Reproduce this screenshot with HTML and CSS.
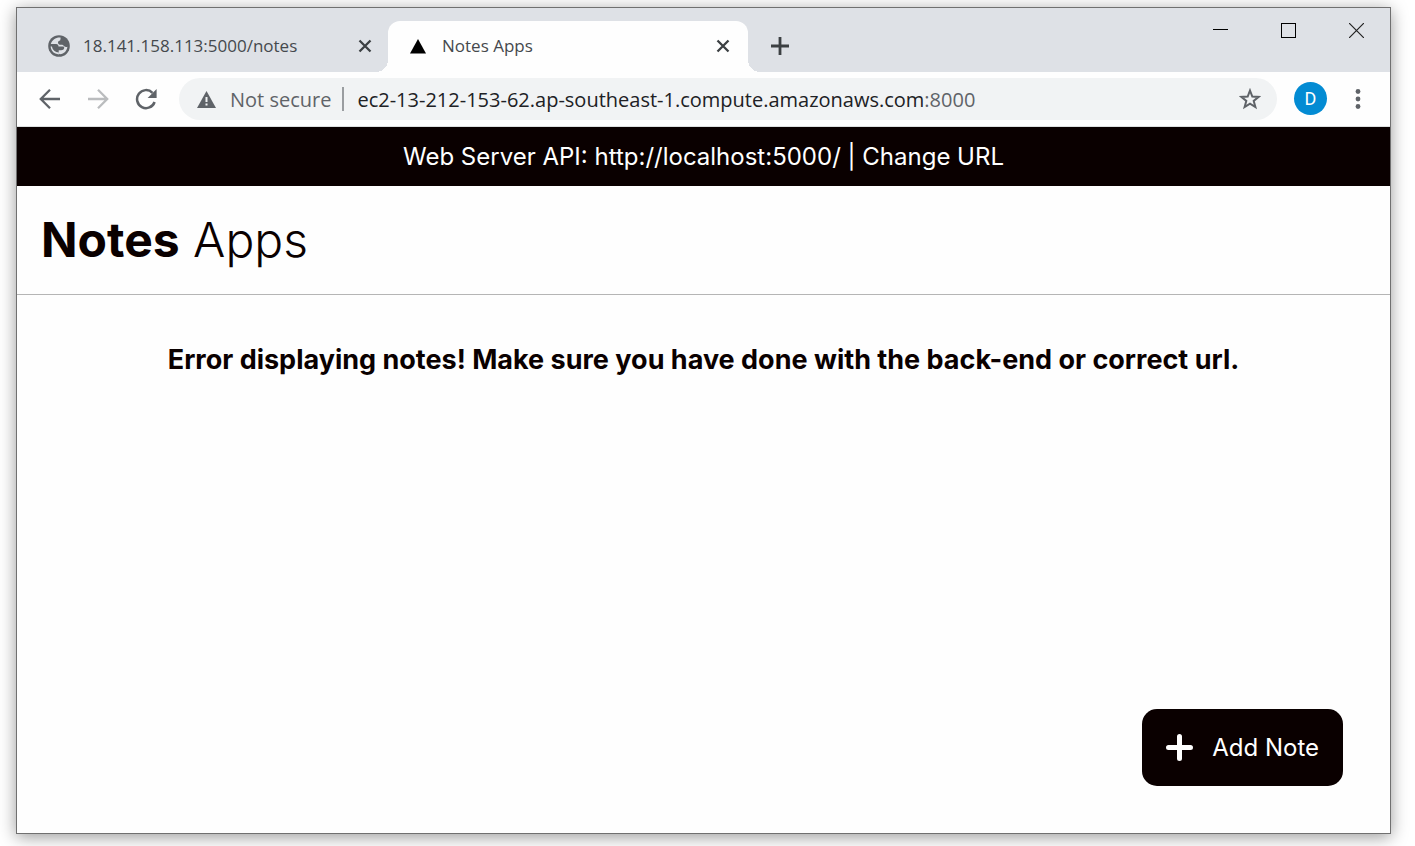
FILE: index.html
```html
<!DOCTYPE html>
<html lang="en">
<head>
<meta charset="utf-8">
<meta name="viewport" content="width=device-width, initial-scale=1">
<title>Notes Apps</title>
<link rel="stylesheet" href="styles.css">
</head>
<body>
<div class="window">
  <div class="tab-strip">
    <div class="tab">
      <svg class="tab-icon" viewBox="0 0 22 22" aria-hidden="true"><circle cx="11" cy="11" r="10.800" fill="#5f6368"/><path d="M12.500 2.600C8 2.200 4.200 4.800 2.800 9h5.400c1.500 0 2.300.9 2.300 2.400h4.300c1.100 0 1.600.7 1.400 1.700-.3 1.600-1.400 2.200-3 2.200h-2.500v2.500c0 .9.500 1.300 1.300 1.500 4-.4 7-3.600 7.400-7.600-1.200.4-2.300.3-3.200-.4-.8-.6-1-1.500-2-1.600h-2.300c-1.200 0-1.900-.9-1.900-2.100 0-1.300.9-1.800 2.100-2.100.5-1 .6-2 .4-2.900z" fill="#dee1e6"/><path d="M2.600 11.500c.2 3.200 2 5.900 4.800 7.100 1.200.5 2.300.8 3.500.8v-1.800c-3.800-.3-6.300-2.600-7-6.100z" fill="#dee1e6"/></svg>
      <span class="tab-title">18.141.158.113:5000/notes</span>
      <button class="tab-close" aria-label="Close tab"><svg viewBox="0 0 14 14"><path d="M1.500 1.500l11 11M12.500 1.500l-11 11" stroke="#3c4043" stroke-width="2.300"/></svg></button>
    </div>
    <div class="tab tab-active">
      <svg class="tab-icon" viewBox="0 0 22 22" aria-hidden="true"><path d="M11 4l8 14.500H3z" fill="#000"/></svg>
      <span class="tab-title">Notes Apps</span>
      <button class="tab-close" aria-label="Close tab"><svg viewBox="0 0 14 14"><path d="M1.500 1.500l11 11M12.500 1.500l-11 11" stroke="#3c4043" stroke-width="2.300"/></svg></button>
    </div>
    <button class="new-tab" aria-label="New tab"><svg viewBox="0 0 18 18"><path d="M9 0v18M0 9h18" stroke="#3c4043" stroke-width="2.800"/></svg></button>
    <div class="window-controls">
      <button class="window-button" aria-label="Minimize"><svg viewBox="0 0 15 15" shape-rendering="crispEdges"><path d="M0 6.500h15" stroke="#000"/></svg></button>
      <button class="window-button" aria-label="Maximize"><svg viewBox="0 0 15 15" shape-rendering="crispEdges"><path d="M.5.5h14v14H.5z" fill="none" stroke="#000"/></svg></button>
      <button class="window-button" aria-label="Close"><svg viewBox="0 0 15 15"><path d="M0 0l15 15M15 0L0 15" stroke="#222" stroke-width="1.200"/></svg></button>
    </div>
  </div>
  <div class="toolbar">
    <div class="nav">
      <button class="nav-button" aria-label="Back"><svg viewBox="0 0 22 22"><path d="M21 11H2.500M11 1.800L1.800 11l9.200 9.200" fill="none" stroke="#5f6368" stroke-width="2.300"/></svg></button>
      <button class="nav-button" aria-label="Forward" disabled><svg viewBox="0 0 22 22"><path d="M1 11h18.500M11 1.800l9.200 9.200-9.200 9.200" fill="none" stroke="#babcbe" stroke-width="2.300"/></svg></button>
      <button class="nav-button" aria-label="Reload"><svg viewBox="0 0 22 22"><path d="M19.600 14A9 9 0 1 1 17.500 4.800" fill="none" stroke="#5f6368" stroke-width="2.500"/><path d="M21.600 1v9h-9z" fill="#5f6368"/></svg></button>
    </div>
    <div class="omnibox">
      <svg class="warning" viewBox="0 0 19 17" aria-hidden="true"><path d="M9.500 0L19 17H0z" fill="#5f6368"/><path d="M9.500 6v5M9.500 12.500v2" stroke="#f1f3f4" stroke-width="2"/></svg>
      <span class="security">Not secure</span>
      <span class="separator"></span>
      <div class="url">ec2-13-212-153-62.ap-southeast-1.compute.amazonaws.com<span class="port">:8000</span></div>
      <button class="star" aria-label="Bookmark this page"><svg viewBox="0 0 22 22"><path d="M11 2.500l2.300 6 6.400.4-5 4 1.700 6.200-5.400-3.500-5.400 3.500 1.700-6.200-5-4 6.400-.4z" fill="none" stroke="#5f6368" stroke-width="2"/></svg></button>
    </div>
    <button class="avatar" aria-label="Profile">D</button>
    <button class="menu" aria-label="Menu"><svg viewBox="0 0 6 20"><g fill="#5f6368"><circle cx="3" cy="2.500" r="2.400"/><circle cx="3" cy="10" r="2.400"/><circle cx="3" cy="17.500" r="2.400"/></g></svg></button>
  </div>
  <div class="server-bar">Web Server API: http://localhost:5000/ | <button class="change-url">Change URL</button></div>
  <header class="app-header"><h1 class="logo"><strong>Notes</strong> Apps</h1></header>
  <main class="content">
    <p class="error">Error displaying notes! Make sure you have done with the back-end or correct url.</p>
    <button class="add-note"><svg viewBox="0 0 28 28" aria-hidden="true"><path d="M13.500 2.500v22M2.500 13.500h22" stroke="#fff" stroke-width="5" stroke-linecap="round"/></svg>Add Note</button>
  </main>
</div>
</body>
</html>
```
FILE: styles.css
```css
* { box-sizing: border-box; }
body {
  margin: 0;
  min-height: 100vh;
  padding: 7px 24px 12px 16px;
  display: flex;
  background: #fff;
  font-family: Inter, sans-serif;
  color: #0a0000;
}
button {
  padding: 0;
  border: 0;
  background: none;
  font: inherit;
  color: inherit;
}
svg { display: block; flex: none; }

.window {
  flex: 1;
  min-width: 0;
  display: flex;
  flex-direction: column;
  border: 1px solid #707070;
  background: #fefefe;
  box-shadow: 0 3px 16px rgba(0, 0, 0, 0.4);
}

.tab-strip {
  height: 64px;
  display: flex;
  align-items: flex-end;
  background: #dee1e6;
  font-family: "Open Sans", sans-serif;
}
.tab {
  flex: 0 1 371px;
  height: 51px;
  padding: 0 16px 2px 31px;
  display: flex;
  align-items: center;
  gap: 13px;
  font-size: 17px;
  color: #45494d;
}
.tab-active {
  position: relative;
  flex-basis: 360px;
  padding: 0 18px 2px 19px;
  border-radius: 12px 12px 0 0;
  background: #fefefe;
}
.tab-active::before,
.tab-active::after {
  content: "";
  position: absolute;
  bottom: 0;
  width: 12px;
  height: 12px;
}
.tab-active::before {
  right: 100%;
  background: radial-gradient(circle at 0 0, transparent 12px, #fefefe 12px);
}
.tab-active::after {
  left: 100%;
  background: radial-gradient(circle at 100% 0, transparent 12px, #fefefe 12px);
}
.tab-icon { width: 22px; height: 22px; }
.tab-title { flex: 1; white-space: nowrap; }
.tab-close svg { width: 14px; height: 14px; }
.new-tab {
  height: 51px;
  padding: 0 23px 2px;
}
.new-tab svg { width: 18px; height: 18px; }
.window-controls {
  align-self: flex-start;
  margin-left: auto;
  display: flex;
}
.window-button {
  width: 68px;
  height: 45px;
  display: grid;
  place-items: center;
}
.window-button svg { width: 15px; height: 15px; }

.toolbar {
  height: 55px;
  padding: 0 29px 1px 22px;
  display: flex;
  align-items: center;
  border-bottom: 1px solid #dde0e0;
  font-family: "Open Sans", sans-serif;
}
.nav { display: flex; gap: 26px; margin-right: 22px; }
.nav-button svg { width: 22px; height: 22px; }
.omnibox {
  flex: 1;
  min-width: 0;
  height: 42px;
  padding: 1px 16px 0 18px;
  display: flex;
  align-items: center;
  border-radius: 21px;
  background: #f1f3f4;
  font-size: 20px;
  white-space: nowrap;
}
.warning { width: 19px; height: 17px; margin-right: 14px; }
.security { color: #5f6368; }
.separator {
  width: 2px;
  height: 24px;
  margin: 0 13px 0 11px;
  background: #9a9da0;
}
.url { flex: 1; overflow: hidden; color: #202124; }
.port { color: #5f6368; }
.star svg { width: 22px; height: 22px; }
.avatar {
  width: 33px;
  height: 33px;
  margin: 0 28px 0 17px;
  border-radius: 50%;
  background: #038bd3;
  font-family: Roboto, sans-serif;
  font-size: 18px;
  color: #fff;
}
.menu svg { width: 6px; height: 20px; }

.server-bar {
  padding: 15px 24px;
  background: #0a0000;
  font-size: 24px;
  line-height: 29px;
  text-align: center;
  color: #fff;
}
.app-header {
  padding: 24px;
  border-bottom: 1px solid #b5b5b5;
}
.logo {
  margin: 0;
  font-size: 48px;
  line-height: 60px;
  font-weight: 300;
}
.logo strong { font-weight: 700; }
.content {
  flex: 1;
  padding: 48px 47px 47px;
  display: flex;
  flex-direction: column;
}
.error {
  margin: 0;
  font-size: 27px;
  line-height: 34px;
  font-weight: 700;
  text-align: center;
}
.add-note {
  margin: auto 0 0 auto;
  height: 77px;
  padding: 0 24px;
  display: flex;
  align-items: center;
  gap: 18px;
  border-radius: 15px;
  background: #0a0000;
  font-size: 24px;
  color: #fff;
}
.add-note svg { width: 28px; height: 28px; }
```
